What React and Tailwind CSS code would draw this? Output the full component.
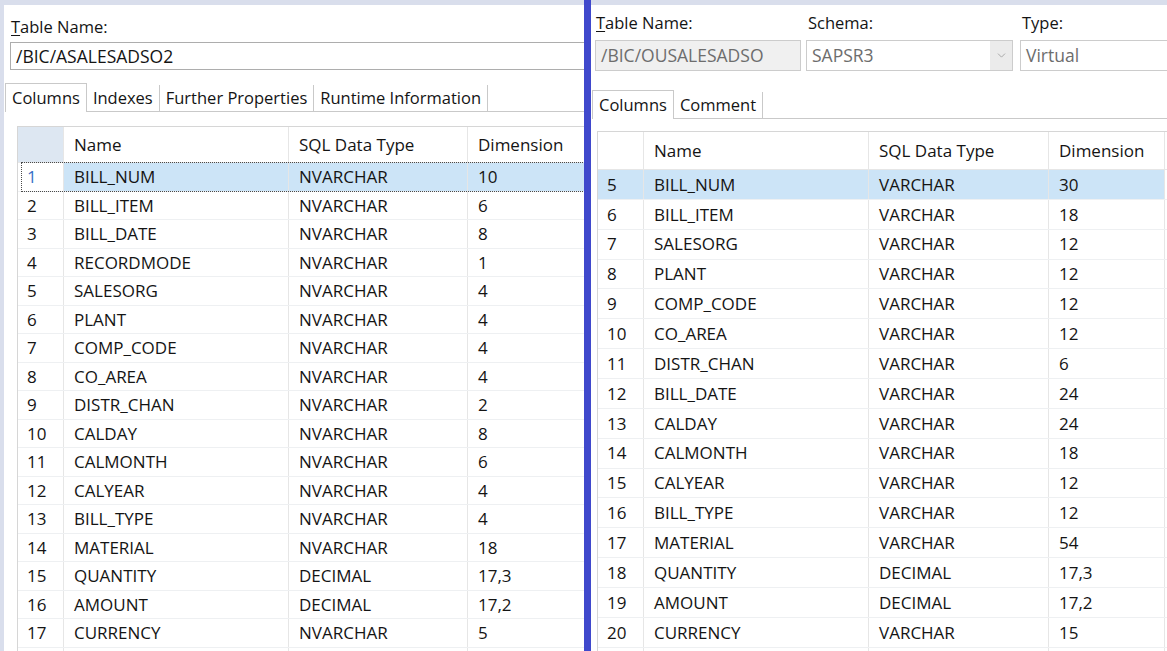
import { ChevronDown } from 'lucide-react';

const leftRows = [
  ['1', 'BILL_NUM', 'NVARCHAR', '10'],
  ['2', 'BILL_ITEM', 'NVARCHAR', '6'],
  ['3', 'BILL_DATE', 'NVARCHAR', '8'],
  ['4', 'RECORDMODE', 'NVARCHAR', '1'],
  ['5', 'SALESORG', 'NVARCHAR', '4'],
  ['6', 'PLANT', 'NVARCHAR', '4'],
  ['7', 'COMP_CODE', 'NVARCHAR', '4'],
  ['8', 'CO_AREA', 'NVARCHAR', '4'],
  ['9', 'DISTR_CHAN', 'NVARCHAR', '2'],
  ['10', 'CALDAY', 'NVARCHAR', '8'],
  ['11', 'CALMONTH', 'NVARCHAR', '6'],
  ['12', 'CALYEAR', 'NVARCHAR', '4'],
  ['13', 'BILL_TYPE', 'NVARCHAR', '4'],
  ['14', 'MATERIAL', 'NVARCHAR', '18'],
  ['15', 'QUANTITY', 'DECIMAL', '17,3'],
  ['16', 'AMOUNT', 'DECIMAL', '17,2'],
  ['17', 'CURRENCY', 'NVARCHAR', '5'],
  ['', '', '', ''],
];

const rightRows = [
  ['5', 'BILL_NUM', 'VARCHAR', '30'],
  ['6', 'BILL_ITEM', 'VARCHAR', '18'],
  ['7', 'SALESORG', 'VARCHAR', '12'],
  ['8', 'PLANT', 'VARCHAR', '12'],
  ['9', 'COMP_CODE', 'VARCHAR', '12'],
  ['10', 'CO_AREA', 'VARCHAR', '12'],
  ['11', 'DISTR_CHAN', 'VARCHAR', '6'],
  ['12', 'BILL_DATE', 'VARCHAR', '24'],
  ['13', 'CALDAY', 'VARCHAR', '24'],
  ['14', 'CALMONTH', 'VARCHAR', '18'],
  ['15', 'CALYEAR', 'VARCHAR', '12'],
  ['16', 'BILL_TYPE', 'VARCHAR', '12'],
  ['17', 'MATERIAL', 'VARCHAR', '54'],
  ['18', 'QUANTITY', 'DECIMAL', '17,3'],
  ['19', 'AMOUNT', 'DECIMAL', '17,2'],
  ['20', 'CURRENCY', 'VARCHAR', '15'],
  ['', '', '', ''],
];

const Label = ({ children, mnemonic }) => (
  <div className="h-5 whitespace-nowrap text-[16.5px] leading-5 text-[#141414]">
    {mnemonic ? (
      <>
        <span className="underline underline-offset-2">{children[0]}</span>
        {children.slice(1)}
      </>
    ) : (
      children
    )}
  </div>
);

const Tab = ({ label, active }) => (
  <div
    className={
      active
        ? 'flex h-[29px] items-center whitespace-nowrap border border-b-0 border-[#c9c9c9] bg-white px-[6px] text-[16.5px] text-[#141414]'
        : 'mt-[2px] flex h-[27px] items-center whitespace-nowrap border-r border-b border-[#c9c9c9] bg-white px-[6px] text-[16.5px] text-[#141414]'
    }
  >
    {label}
  </div>
);

const ColumnsTable = ({ rows, headerH, rowH, widths, leftSelected }) => (
  <div className="w-[700px] border-t border-l border-[#d6d6d6] bg-white text-[17px] text-[#141414]">
    <div className="flex border-b border-[#e6e6e6]" style={{ height: headerH }}>
      <div className={`shrink-0 border-r border-[#e6e6e6] ${leftSelected ? 'bg-[#dde7f2]' : 'bg-white'}`} style={{ width: widths[0] }} />
      {['Name', 'SQL Data Type', 'Dimension'].map((h, i) => (
        <div key={h} className="flex shrink-0 items-center whitespace-nowrap border-r border-[#e6e6e6] pl-[10px]" style={{ width: widths[i + 1] }}>
          {h}
        </div>
      ))}
    </div>
    {rows.map((r, idx) => {
      const sel = idx === 0;
      return (
        <div key={idx} className="relative flex border-b border-[#eef0f2]" style={{ height: rowH }}>
          <div
            className={`flex shrink-0 items-center border-r border-[#e6e6e6] pl-[9px] ${sel && !leftSelected ? 'bg-[#cce4f7]' : ''} ${sel && leftSelected ? 'text-[#3a6ec6]' : ''}`}
            style={{ width: widths[0] }}
          >
            {r[0]}
          </div>
          {[1, 2, 3].map(c => (
            <div
              key={c}
              className={`flex shrink-0 items-center whitespace-nowrap border-r border-[#e6e6e6] pl-[10px] ${sel ? 'bg-[#cce4f7]' : ''}`}
              style={{ width: widths[c] }}
            >
              {r[c]}
            </div>
          ))}
          {sel && leftSelected && (
            <div className="pointer-events-none absolute inset-y-[-1px] left-[3px] right-0 border-y border-l border-dotted border-[#4a4a4a]" />
          )}
        </div>
      );
    })}
  </div>
);

export default function App() {
  return (
    <div className="flex h-[651px] w-[1167px] overflow-hidden bg-[#d9deec] pt-[5px] pl-[4px] font-['Open_Sans','Noto_Sans',sans-serif]">
      {/* left editor */}
      <div className="h-full w-[580px] shrink-0 overflow-hidden bg-white">
        <div className="pt-[12px] pl-[7px]">
          <Label mnemonic>Table Name:</Label>
        </div>
        <div className="mt-[5px] ml-[6px] flex h-[28px] w-[600px] items-center border border-[#adadad] pl-[5px] text-[17.5px] text-[#141414]">
          /BIC/ASALESADSO2
        </div>
        <div className="mt-[13px] ml-[1px] flex items-end">
          <Tab label="Columns" active />
          <Tab label="Indexes" />
          <Tab label="Further Properties" />
          <Tab label="Runtime Information" />
          <div className="h-[29px] flex-1 border-b border-[#c9c9c9]" />
        </div>
        <div className="mt-[14px] ml-[13px]">
          <ColumnsTable rows={leftRows} headerH={36} rowH={28.5} widths={[46, 225, 179, 200]} leftSelected />
        </div>
      </div>

      {/* splitter */}
      <div className="-mt-[5px] h-[651px] w-[7px] shrink-0 bg-[#3f48cc]" />

      {/* right editor */}
      <div className="h-full flex-1 overflow-hidden bg-white">
        <div className="grid grid-cols-[206px_207px_200px] gap-x-[5px] pt-[8px] pl-[4px]">
          <div className="pl-[1px]"><Label mnemonic>Table Name:</Label></div>
          <div className="pl-[2px]"><Label>Schema:</Label></div>
          <div className="pl-[4px]"><Label>Type:</Label></div>
          <div className="mt-[7px] flex h-[31px] items-center whitespace-nowrap border border-[#cccccc] bg-[#f0f0f0] pl-[5px] text-[17.5px] text-[#6d6d6d]">
            /BIC/OUSALESADSO
          </div>
          <div className="mt-[7px] flex h-[31px] items-center border border-[#cccccc] bg-white pl-[5px] text-[17.5px] text-[#6d6d6d]">
            <span className="flex-1">SAPSR3</span>
            <span className="flex h-full w-[22px] items-center justify-center bg-[#ebebeb]">
              <ChevronDown size={13} strokeWidth={1.5} className="text-[#9a9a9a]" />
            </span>
          </div>
          <div className="mt-[7px] ml-[2px] flex h-[31px] items-center border border-[#cccccc] bg-white pl-[5px] text-[17.5px] text-[#6d6d6d]">
            Virtual
          </div>
        </div>
        <div className="mt-[19px] ml-[1px] flex items-end">
          <Tab label="Columns" active />
          <Tab label="Comment" />
          <div className="h-[29px] flex-1 border-b border-[#c9c9c9]" />
        </div>
        <div className="mt-[12px] ml-[6px]">
          <ColumnsTable rows={rightRows} headerH={38} rowH={29.87} widths={[46, 225, 180, 116]} />
        </div>
      </div>
    </div>
  );
}
